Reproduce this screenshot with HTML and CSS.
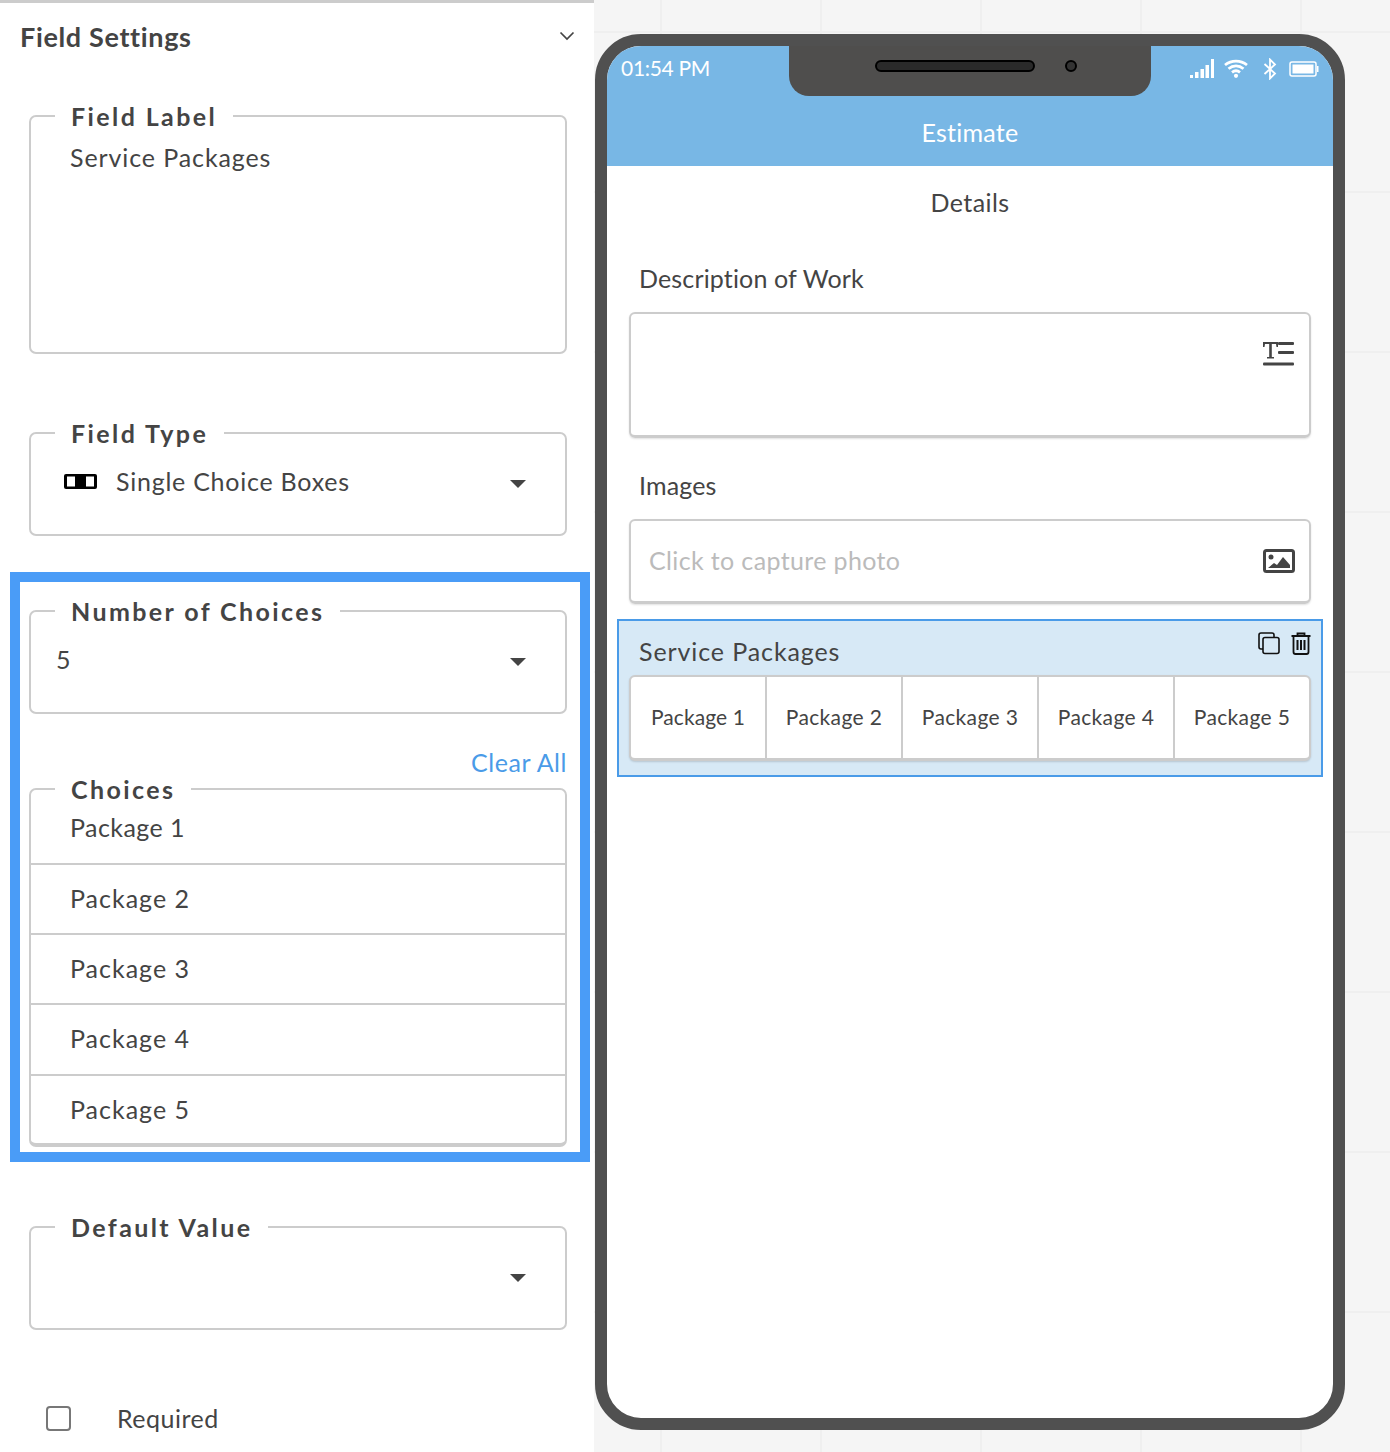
FILE: index.html
```html
<!DOCTYPE html>
<html lang="en">
<head>
    <meta charset="UTF-8">
    <title>Field Settings</title>
    <link rel="stylesheet" href="styles.css">
</head>
<body>
    <!-- Settings panel -->
    <div class="panel">
        <div class="panel-head">
            <h2>Field Settings</h2>
            <svg class="chevron" width="16" height="10" viewBox="0 0 16 10"><path d="M1.500 1.500 8 8l6.500-6.500" fill="none" stroke="#444" stroke-width="1.700"/></svg>
        </div>

        <fieldset class="field field-label">
            <legend>Field Label</legend>
            <div class="value">Service Packages</div>
        </fieldset>

        <fieldset class="field field-select field-type">
            <legend>Field Type</legend>
            <div class="select-row">
                <svg class="type-icon" width="33" height="15" viewBox="0 0 33 15"><rect x="0" y="0" width="33" height="15" rx="2" fill="#000"/><rect x="3" y="2.500" width="8" height="10" fill="#fff"/><rect x="22" y="2.500" width="8" height="10" fill="#fff"/></svg>
                <span class="type-name">Single Choice Boxes</span>
                <i class="caret"></i>
            </div>
        </fieldset>

        <div class="highlight">
            <fieldset class="field field-select count">
                <legend>Number of Choices</legend>
                <div class="select-row">
                    <span>5</span>
                    <i class="caret"></i>
                </div>
            </fieldset>

            <div class="clear-all">Clear All</div>

            <fieldset class="field choices">
                <legend>Choices</legend>
                <div class="choice">Package 1</div>
                <div class="choice">Package 2</div>
                <div class="choice">Package 3</div>
                <div class="choice">Package 4</div>
                <div class="choice">Package 5</div>
            </fieldset>
        </div>

        <fieldset class="field field-select default-value">
            <legend>Default Value</legend>
            <div class="select-row">
                <span></span>
                <i class="caret"></i>
            </div>
        </fieldset>

        <div class="required">
            <span class="checkbox"></span>
            <span>Required</span>
        </div>
    </div>

    <!-- Phone preview -->
    <div class="phone">
        <div class="notch">
            <span class="speaker"></span>
            <span class="camera"></span>
        </div>
        <div class="app-top">
            <div class="status-bar">
                <span class="time">01:54 PM</span>
                <div class="status-icons">
                    <svg width="24" height="20" viewBox="0 0 24 20"><g fill="#fff"><rect x="0" y="16" width="3" height="3"/><rect x="5" y="13" width="3.500" height="6"/><rect x="10.500" y="10" width="3.500" height="9"/><rect x="15.500" y="6" width="3.500" height="13"/><rect x="21" y="0" width="3" height="19"/></g></svg>
                    <svg width="24" height="20" viewBox="0 0 24 20"><path d="M1 6C7.500 .8 16.500 .8 23 6M4.500 9.800C9 6 15 6 19.500 9.800M8 13.300c2.500-2 5.500-2 8 0" fill="none" stroke="#fff" stroke-width="2.800"/><circle cx="12" cy="16.800" r="2.100" fill="#fff"/></svg>
                    <svg width="14" height="22" viewBox="0 0 14 22"><path d="M1.500 6l10.500 9.500L7 20.500V1.500l5 5L1.500 16" fill="none" stroke="#fff" stroke-width="1.800"/></svg>
                    <svg width="30" height="16" viewBox="0 0 30 16"><rect x="1" y="1" width="26" height="14" rx="2" fill="none" stroke="#fff" stroke-width="1.500"/><rect x="3.500" y="3.500" width="21" height="9" fill="#fff"/><path d="M28 5h1.500v6H28z" fill="#fff"/></svg>
                </div>
            </div>
            <div class="app-title">Estimate</div>
        </div>
        <div class="section-title">Details</div>

        <div class="form-label">Description of Work</div>
        <div class="input text-area">
            <svg width="32" height="26" viewBox="0 0 32 26"><g fill="#444"><path d="M0 1h15v5h-1.500L13 3H8.800v13H11v1.500H4V16h2.200V3H2l-.5 3H0z"/><rect x="15" y="1" width="16" height="3" rx="1"/><rect x="15" y="10" width="16" height="3" rx="1"/><rect x="0" y="21.500" width="31" height="3" rx="1"/></g></svg>
        </div>

        <div class="form-label images-label">Images</div>
        <div class="input photo">
            <span>Click to capture photo</span>
            <svg width="32" height="25" viewBox="0 0 32 25"><rect x="1.500" y="1.500" width="29" height="21" rx="2" fill="none" stroke="#444" stroke-width="3"/><circle cx="8" cy="8" r="2.500" fill="#444"/><path d="M5 19l6-5 3 2 6-8 7 8v3z" fill="#444"/></svg>
        </div>

        <div class="selected">
            <div class="selected-tools">
                <svg width="24" height="24" viewBox="0 0 24 24"><path d="M6 18H4a2 2 0 0 1-2-2V4a2 2 0 0 1 2-2h11a2 2 0 0 1 2 2v2" fill="none" stroke="#111" stroke-width="1.600"/><rect x="6" y="6.500" width="16" height="16" rx="2" fill="none" stroke="#111" stroke-width="1.600"/></svg>
                <svg width="22" height="24" viewBox="0 0 22 24"><path d="M1.500 5h19M7.500 5V2.500h7V5M3.500 5v16a2 2 0 0 0 2 2h11a2 2 0 0 0 2-2V5" fill="none" stroke="#111" stroke-width="1.800"/><path d="M7.500 9v10M11 9v10M14.500 9v10" stroke="#111" stroke-width="2"/></svg>
            </div>
            <div class="selected-title">Service Packages</div>
            <div class="options">
                <div class="option">Package 1</div>
                <div class="option">Package 2</div>
                <div class="option">Package 3</div>
                <div class="option">Package 4</div>
                <div class="option">Package 5</div>
            </div>
        </div>
    </div>
</body>
</html>
```

FILE: styles.css
```css
* {
    box-sizing: border-box;
}

html, body {
    margin: 0;
    height: 100%;
}

body {
    display: flex;
    align-items: flex-start;
    height: 1452px;
    overflow: hidden;
    font-family: Lato, "Open Sans", sans-serif;
    color: #444;
    background-color: #f5f5f5;
    background-image:
        linear-gradient(#efefef 2px, transparent 2px),
        linear-gradient(90deg, #efefef 2px, transparent 2px);
    background-size: 160px 160px;
    background-position: 0 31px, 20px 0;
}

/* Settings panel */
.panel {
    width: 594px;
    height: 1452px;
    flex: none;
    background: white;
    border-top: 3px solid #ccc;
}

.panel-head {
    display: flex;
    justify-content: space-between;
    align-items: center;
    height: 66px;
    padding: 0 19px 0 20px;
}

.panel-head h2 {
    margin: 0;
    padding-top: 2px;
    font-size: 27px;
    font-weight: 700;
    letter-spacing: 0.65px;
    line-height: 64px;
}

.field {
    width: 538px;
    margin: 0 0 0 29px;
    padding: 0;
    border: 2px solid #ccc;
    border-radius: 7px;
}

.field legend {
    margin-left: 24px;
    padding: 0 16px;
    font-size: 25px;
    font-weight: 700;
    letter-spacing: 2.400px;
    line-height: 30px;
}

.field-label {
    height: 253px;
    margin-top: 32px;
}

.value {
    padding: 11px 0 0 39px;
    font-size: 25px;
    letter-spacing: 0.9px;
    line-height: 30px;
}

.field-select {
    height: 118px;
}

.field-type {
    margin-top: 64px;
}

.select-row {
    display: flex;
    align-items: center;
    gap: 19px;
    height: 30px;
    margin-top: 18px;
    padding: 0 39px 0 25px;
    font-size: 25px;
    line-height: 30px;
}

.select-row .type-icon {
    margin-left: 8px;
}

.type-name {
    letter-spacing: 0.75px;
}

.caret {
    width: 0;
    height: 0;
    margin-left: auto;
    margin-top: 5px;
    border-left: 8px solid transparent;
    border-right: 8px solid transparent;
    border-top: 8px solid #444;
}

.highlight {
    width: 580px;
    margin: 36px 0 0 10px;
    padding: 14px 13px 5px 9px;
    border: 10px solid #4a9cf7;
}

.highlight .field {
    margin-left: 0;
}

.clear-all {
    height: 27px;
    margin-top: 33px;
    text-align: right;
    font-size: 25px;
    letter-spacing: 0.55px;
    line-height: 30px;
    color: #4a9be8;
}

.choices {
    height: 373px;
    border-bottom-width: 4px;
}

.choice {
    height: 70px;
    padding: 18px 0 0 39px;
    border-bottom: 2px solid #ccc;
    font-size: 25px;
    letter-spacing: 1px;
    line-height: 30px;
}

.choice:first-of-type {
    height: 61px;
    padding-top: 8px;
    letter-spacing: 0.45px;
}

.choice:nth-of-type(4) {
    height: 71px;
}

.choice:last-child {
    border-bottom: none;
}

.default-value {
    margin-top: 50px;
}

.default-value .select-row span {
    flex: 1;
}

.required {
    display: flex;
    align-items: center;
    gap: 46px;
    margin: 73px 0 0 46px;
    font-size: 25px;
    letter-spacing: 0.5px;
    line-height: 30px;
}

.checkbox {
    width: 25px;
    height: 25px;
    border: 2px solid #777;
    border-radius: 4px;
}

/* Phone preview */
.phone {
    position: relative;
    width: 750px;
    height: 1396px;
    flex: none;
    margin: 34px 0 0 1px;
    padding-bottom: 20px;
    border: 12px solid #505050;
    border-radius: 46px;
    background: white;
    overflow: hidden;
}

.notch {
    position: absolute;
    top: 0;
    left: 182px;
    display: flex;
    align-items: center;
    gap: 30px;
    width: 362px;
    height: 50px;
    padding: 0 0 10px 86px;
    border-radius: 0 0 20px 20px;
    background: #4f4e4d;
}

.speaker {
    width: 160px;
    height: 12px;
    border: 2px solid #000;
    border-radius: 6px;
    background: #2a2a2a;
}

.camera {
    width: 12px;
    height: 12px;
    border: 2px solid #000;
    border-radius: 50%;
    background: #333;
}

.app-top {
    height: 120px;
    background: #78b7e5;
    color: white;
}

.status-bar {
    display: flex;
    justify-content: space-between;
    align-items: center;
    height: 46px;
    padding: 0 14px 0 14px;
}

.time {
    margin-bottom: 4px;
    font-size: 21px;
    letter-spacing: -0.3px;
    line-height: 45px;
}

.status-icons {
    display: flex;
    align-items: center;
    gap: 11px;
}

.status-icons svg:nth-child(1) {
    margin-right: -1px;
}

.status-icons svg:nth-child(3) {
    margin-left: 4px;
}

.status-icons svg:nth-child(4) {
    margin-left: 1px;
}

.app-title {
    padding-top: 25px;
    text-align: center;
    font-size: 25px;
    letter-spacing: 0.25px;
    line-height: 30px;
}

.section-title {
    padding-top: 21px;
    text-align: center;
    font-size: 25px;
    letter-spacing: 0.4px;
    line-height: 30px;
}

.form-label {
    padding: 46px 0 0 32px;
    font-size: 25px;
    letter-spacing: 0.15px;
    line-height: 30px;
}

.images-label {
    padding-top: 32px;
}

.input {
    display: flex;
    justify-content: space-between;
    width: 682px;
    margin: 19px 0 0 22px;
    border: 2px solid #ccc;
    border-bottom-width: 3px;
    border-radius: 6px;
    box-shadow: 0 1px 2px rgba(0, 0, 0, 0.12);
}

.text-area {
    justify-content: flex-end;
    height: 126px;
    padding: 27px 14px 0 0;
}

.text-area svg {
    height: 26px;
}

.photo {
    align-items: center;
    height: 85px;
    padding: 0 14px 0 18px;
    font-size: 25px;
    letter-spacing: 0.36px;
    color: #bbb;
}

.photo span {
    margin-bottom: 2px;
}

.selected {
    position: relative;
    height: 158px;
    width: 706px;
    margin: 15px 0 0 10px;
    padding: 15px 0 0 10px;
    border: 2px solid #4a9be8;
    background: #d7e9f6;
}

.selected-tools {
    position: absolute;
    top: 10px;
    right: 9px;
    display: flex;
    gap: 9px;
}

.selected-title {
    padding-left: 10px;
    font-size: 25px;
    letter-spacing: 0.9px;
    line-height: 30px;
}

.options {
    display: flex;
    width: 682px;
    height: 86px;
    margin-top: 9px;
    border: 2px solid #ccc;
    border-bottom-width: 3px;
    border-radius: 6px;
    background: white;
    box-shadow: 0 1px 2px rgba(0, 0, 0, 0.15);
}

.option {
    flex: 1;
    border-right: 2px solid #ccc;
    text-align: center;
    font-size: 21px;
    letter-spacing: 0.35px;
    line-height: 80px;
}

.option:first-child {
    letter-spacing: 0.1px;
}

.option:last-child {
    border-right: none;
}
```
